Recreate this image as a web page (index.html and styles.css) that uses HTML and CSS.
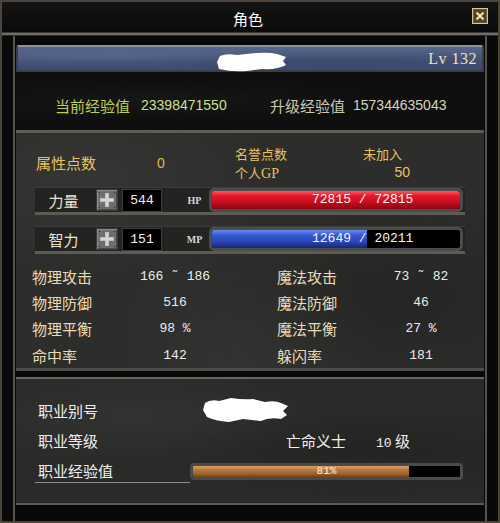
FILE: index.html
```html
<!DOCTYPE html>
<html lang="zh">
<head>
<meta charset="utf-8">
<title>角色</title>
<link rel="stylesheet" href="styles.css">
</head>
<body>
<div class="window">
  <div class="titlebar">
    <span class="title">角色</span>
    <span class="close">
      <svg width="16" height="16" viewBox="0 0 16 16">
        <rect x="0.5" y="0.5" width="15" height="15" fill="#6b5b33" stroke="#d8c68a"/>
        <rect x="2" y="2" width="12" height="12" fill="#4e4226"/>
        <path d="M4.5 4.5 L11.5 11.5 M11.5 4.5 L4.5 11.5" stroke="#efe3b0" stroke-width="2.2"/>
      </svg>
    </span>
  </div>
  <div class="sep"></div>
  <div class="content">
    <div class="namebar">
      <svg class="blob1" width="70" height="20" viewBox="0 0 70 20">
        <path d="M3 4 Q10 1 20 3 L40 1 Q52 0 60 2 L69 5 L66 9 L69 13 Q60 18 45 17 L30 19 Q14 20 2 17 L0 10 Z" fill="#fff"/>
      </svg>
      <span class="lv">Lv 132</span>
    </div>
    <div class="exp">
      <div class="exp-cur"><span class="exp-label">当前经验值</span><span class="exp-num">23398471550</span></div>
      <div class="exp-next"><span class="exp-label2">升级经验值</span><span class="exp-num2">157344635043</span></div>
    </div>
    <div class="attrs">
      <div class="points">
        <span class="pt-label">属性点数</span>
        <span class="pt-val">0</span>
        <div class="honor">
          <span class="line">名誉点数</span>
          <span class="line">个人<span class="serif">GP</span></span>
        </div>
        <div class="guild">
          <span class="line">未加入</span>
          <span class="line right">50</span>
        </div>
      </div>
      <div class="strip">
        <span class="s-label">力量</span>
        <span class="plus">
          <svg width="22" height="22" viewBox="0 0 22 22">
            <rect x="0" y="0" width="22" height="22" fill="#3a3a3a"/>
            <rect x="1" y="1" width="20" height="20" fill="#8a8a8a"/>
            <rect x="2" y="2" width="19" height="19" fill="#4a4a4a"/>
            <rect x="2" y="2" width="18" height="18" fill="#6e6e6e"/>
            <rect x="9" y="4" width="4" height="14" fill="#bdbdbd"/>
            <rect x="4" y="9" width="14" height="4" fill="#bdbdbd"/>
            <rect x="10" y="5" width="2" height="12" fill="#d6d6d6"/>
            <rect x="5" y="10" width="12" height="2" fill="#d6d6d6"/>
            <rect x="3" y="3" width="1" height="1" fill="#2a2a2a"/>
            <rect x="18" y="3" width="1" height="1" fill="#2a2a2a"/>
            <rect x="3" y="18" width="1" height="1" fill="#2a2a2a"/>
            <rect x="18" y="18" width="1" height="1" fill="#2a2a2a"/>
          </svg>
        </span>
        <span class="valbox">544</span>
        <span class="tag">HP</span>
        <div class="bar"><div class="fill hp" style="width:100%"></div><span class="bar-text">72815 / 72815</span></div>
      </div>
      <div class="strip strip2">
        <span class="s-label">智力</span>
        <span class="plus">
          <svg width="22" height="22" viewBox="0 0 22 22">
            <rect x="0" y="0" width="22" height="22" fill="#3a3a3a"/>
            <rect x="1" y="1" width="20" height="20" fill="#8a8a8a"/>
            <rect x="2" y="2" width="19" height="19" fill="#4a4a4a"/>
            <rect x="2" y="2" width="18" height="18" fill="#6e6e6e"/>
            <rect x="9" y="4" width="4" height="14" fill="#bdbdbd"/>
            <rect x="4" y="9" width="14" height="4" fill="#bdbdbd"/>
            <rect x="10" y="5" width="2" height="12" fill="#d6d6d6"/>
            <rect x="5" y="10" width="12" height="2" fill="#d6d6d6"/>
            <rect x="3" y="3" width="1" height="1" fill="#2a2a2a"/>
            <rect x="18" y="3" width="1" height="1" fill="#2a2a2a"/>
            <rect x="3" y="18" width="1" height="1" fill="#2a2a2a"/>
            <rect x="18" y="18" width="1" height="1" fill="#2a2a2a"/>
          </svg>
        </span>
        <span class="valbox">151</span>
        <span class="tag">MP</span>
        <div class="bar"><div class="fill mp" style="width:62.6%"></div><span class="bar-text">12649 / 20211</span></div>
      </div>
      <div class="stats">
        <span class="st-label">物理攻击</span><span class="st-val">166 ˜ 186</span><span></span>
        <span class="st-label">魔法攻击</span><span class="st-val">73 ˜ 82</span>
        <span class="st-label">物理防御</span><span class="st-val">516</span><span></span>
        <span class="st-label">魔法防御</span><span class="st-val">46</span>
        <span class="st-label">物理平衡</span><span class="st-val">98 %</span><span></span>
        <span class="st-label">魔法平衡</span><span class="st-val">27 %</span>
        <span class="st-label">命中率</span><span class="st-val">142</span><span></span>
        <span class="st-label">躲闪率</span><span class="st-val">181</span>
      </div>
    </div>
    <div class="job">
      <div class="job-row">
        <span class="j-label w1">职业别号</span>
        <svg class="blob2" width="86" height="26" viewBox="0 0 86 26">
          <path d="M2 6 Q8 2 16 4 L28 1 Q40 3 50 2 L62 5 Q72 3 78 6 L85 9 L80 14 L84 18 L78 22 Q66 20 58 24 L40 22 L26 25 Q12 24 4 20 L0 13 Z" fill="#fff"/>
        </svg>
      </div>
      <div class="job-row">
        <span class="j-label w2">职业等级</span>
        <span class="j-class">亡命义士</span>
        <span class="j-lvl"><span class="num">10</span> 级</span>
      </div>
      <div class="job-row r3">
        <span class="j-label w3">职业经验值</span>
        <div class="jbar"><div class="jfill" style="width:81%"></div><span class="jbar-text">81%</span></div>
      </div>
    </div>
  </div>
</div>
</body>
</html>
```

FILE: styles.css
```css
* { box-sizing: border-box; margin: 0; padding: 0; }
html, body { width: 500px; height: 523px; overflow: hidden; background: #000; }
body { font-family: "Noto Sans CJK SC", "Noto Sans", sans-serif; }

.window {
  width: 500px;
  height: 523px;
  background: #090909;
  border: 2px solid #4a463c;
  display: flex;
  flex-direction: column;
}

.titlebar {
  height: 30px;
  display: flex;
  align-items: center;
  justify-content: center;
  position: relative;
  background: linear-gradient(#141414, #0a0a0a);
}
.title {
  color: #fff;
  font-size: 15px;
  line-height: 30px;
  padding-top: 4px;
  margin-left: -4px;
}
.close {
  position: absolute;
  right: 10px;
  top: 6px;
  width: 16px;
  height: 16px;
  display: block;
}
.close svg { display: block; }

.sep {
  height: 4px;
  background: #6f6d66;
  border-top: 1px solid #3c3a36;
  border-bottom: 1px solid #2a2a28;
}

.content {
  flex: 1;
  margin: 0 11px;
  border-left: 2px solid #55534d;
  border-right: 2px solid #55534d;
  padding: 9px 1px 0 1px;
  display: flex;
  flex-direction: column;
}

.namebar {
  height: 27px;
  border: 2px solid #3a3e48;
  border-top-color: #8a93a8;
  border-radius: 3px 3px 0 0;
  background:
    radial-gradient(ellipse at 20% 40%, rgba(255,255,255,0.06), transparent 40%),
    radial-gradient(ellipse at 70% 60%, rgba(0,0,0,0.12), transparent 50%),
    linear-gradient(#56658a, #46547a 60%, #3e4a6c);
  display: flex;
  align-items: center;
  position: relative;
}
.blob1 { position: absolute; left: 199px; top: 5px; }
.lv {
  margin-left: auto;
  margin-right: 5px;
  font-family: "Liberation Serif", serif;
  font-size: 16px;
  color: #ece4b8;
  letter-spacing: 0.5px;
}

.exp {
  height: 61px;
  background:
    radial-gradient(ellipse at 30% 50%, rgba(255,255,255,0.03), transparent 50%),
    #0f0f0f;
  border-bottom: 3px solid #5e5d58;
  display: flex;
  align-items: center;
  padding: 8px 0 0 39px;
}
.exp-cur { width: 215px; display: flex; align-items: center; }
.exp-next { display: flex; align-items: center; }
.exp-label { color: #b9d05a; font-size: 15px; }
.exp-num { color: #cbe08c; font-family: "Liberation Sans", sans-serif; font-size: 14px; margin-left: 11px; }
.exp-label2 { color: #c9c8b2; font-size: 15px; }
.exp-num2 { color: #d4d3be; font-family: "Liberation Sans", sans-serif; font-size: 14px; margin-left: 8px; }

.attrs {
  height: 238px;
  background:
    radial-gradient(ellipse at 15% 20%, rgba(255,255,255,0.04), transparent 35%),
    radial-gradient(ellipse at 80% 70%, rgba(0,0,0,0.18), transparent 45%),
    radial-gradient(ellipse at 50% 90%, rgba(255,255,255,0.03), transparent 40%),
    #2d2d2c;
  border-bottom: 3px solid #4e4d48;
  display: flex;
  flex-direction: column;
}

.points {
  display: flex;
  align-items: center;
  padding: 12px 0 0 20px;
  height: 47px;
  color: #e6c45c;
  font-size: 15px;
}
.pt-label { width: 110px; }
.pt-val { width: 30px; text-align: center; font-family: "Liberation Sans", sans-serif; font-size: 14px; color: #dcbc54; }
.honor { margin-left: 59px; width: 128px; display: flex; flex-direction: column; }
.guild { width: 47px; display: flex; flex-direction: column; }
.line { display: block; height: 19px; line-height: 19px; font-size: 13px; }
.guild .right { text-align: right; font-family: "Liberation Sans", sans-serif; font-size: 14px; }
.serif { font-family: "Liberation Serif", serif; font-size: 14px; line-height: 1; }

.strip {
  margin: 7px 0 0 19px;
  width: 430px;
  height: 28px;
  background: #232322;
  border-top: 1px solid #3c3c3a;
  border-bottom: 3px solid #5c5b56;
  display: flex;
  align-items: center;
}
.strip2 { margin-top: 11px; }
.s-label {
  width: 57px;
  text-align: center;
  color: #ebe3d0;
  font-size: 15px;
}
.plus { width: 22px; height: 22px; margin-left: 4px; display: block; }
.plus svg { display: block; }
.valbox {
  width: 40px;
  height: 23px;
  margin-left: 4px;
  background: #000;
  border: 1px solid #3e3e3e;
  color: #f2f2f2;
  font-family: "Liberation Mono", monospace;
  font-size: 13px;
  line-height: 21px;
  text-align: center;
}
.tag {
  width: 47px;
  padding-left: 18px;
  text-align: center;
  font-family: "Liberation Serif", serif;
  font-weight: bold;
  font-size: 10px;
  color: #d8d8d8;
}
.bar {
  width: 254px;
  height: 24px;
  border: 3px solid #4c4c4a;
  border-radius: 5px;
  background: #000;
  position: relative;
  overflow: hidden;
}
.fill { height: 100%; }
.fill.hp { background: linear-gradient(#ff5a64 0%, #e81a2a 25%, #c80f1f 60%, #8a0612 100%); border-radius: 0 3px 3px 0; }
.fill.mp { background: linear-gradient(#6b8af0 0%, #3458d0 30%, #2a46b8 65%, #17286e 100%); }
.bar-text {
  position: absolute;
  left: 0; right: 0; top: 0; bottom: 0;
  padding-left: 100px;
  line-height: 18px;
  color: #f4f4f4;
  font-family: "Liberation Mono", monospace;
  font-size: 13px;
  white-space: nowrap;
}

.stats {
  margin-top: 9px;
  padding-left: 16px;
  display: grid;
  grid-template-columns: 98px 90px 57px 99px 90px;
  grid-auto-rows: 26.33px;
  align-items: center;
}
.st-label { color: #e9dcb4; font-size: 15px; }
.st-val {
  text-align: center;
  color: #ececec;
  font-family: "Liberation Mono", monospace;
  font-size: 13px;
}

.job {
  margin-top: 6px;
  height: 128px;
  border-top: 2px solid #66655f;
  border-bottom: 2px solid #5a5954;
  background:
    radial-gradient(ellipse at 25% 30%, rgba(255,255,255,0.04), transparent 40%),
    radial-gradient(ellipse at 75% 60%, rgba(0,0,0,0.16), transparent 45%),
    #2a2a29;
  padding-top: 16px;
  display: flex;
  flex-direction: column;
}
.job-row { height: 30px; display: flex; align-items: center; }
.job-row.r3 { height: 32px; }
.j-label {
  margin-left: 19px;
  padding-left: 3px;
  color: #f0f0f0;
  font-size: 15px;
}
.w1 { width: 168px; }
.w2 { width: 251px; }
.w3 { width: 155px; border-bottom: 1px solid #8a8a86; line-height: 22px; padding-top: 2px; align-self: flex-end; margin-bottom: 4px; }
.blob2 { display: block; }
.j-class { width: 90px; color: #f0f0f0; font-size: 15px; }
.j-lvl { color: #f0f0f0; font-size: 15px; }
.j-lvl .num { font-family: "Liberation Mono", monospace; font-size: 13px; }
.jbar {
  width: 273px;
  height: 17px;
  border: 3px solid #4a4a48;
  border-radius: 4px;
  background: #000;
  position: relative;
  overflow: hidden;
}
.jfill { height: 100%; background: linear-gradient(#d9a066 0%, #b8783c 35%, #a0642c 70%, #6e4218 100%); }
.jbar-text {
  position: absolute;
  left: 0; right: 0; top: 0;
  text-align: center;
  line-height: 11px;
  font-family: "Liberation Mono", monospace;
  font-size: 11px;
  color: #f8f0e0;
}
```
